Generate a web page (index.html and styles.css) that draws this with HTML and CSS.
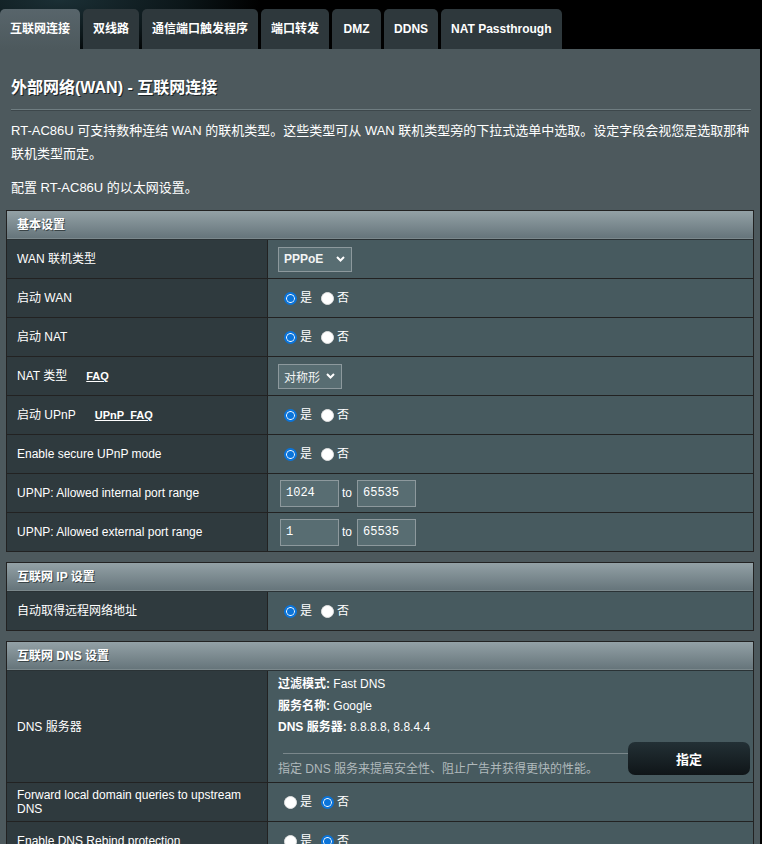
FILE: index.html
```html
<!DOCTYPE html>
<html lang="zh-CN">
<head>
<meta charset="utf-8">
<title>外部网络(WAN) - 互联网连接</title>
<link rel="stylesheet" href="styles.css">
</head>
<body>
<nav class="tabs">
  <a class="tab active">互联网连接</a>
  <a class="tab">双线路</a>
  <a class="tab">通信端口触发程序</a>
  <a class="tab">端口转发</a>
  <a class="tab tab-wide">DMZ</a>
  <a class="tab">DDNS</a>
  <a class="tab">NAT Passthrough</a>
</nav>
<main class="panel">
  <h1 class="title">外部网络(WAN) - 互联网连接</h1>
  <div class="split"></div>
  <p class="desc">RT-AC86U 可支持数种连结 WAN 的联机类型。这些类型可从 WAN 联机类型旁的下拉式选单中选取。设定字段会视您是选取那种联机类型而定。</p>
  <p class="desc desc-2">配置 RT-AC86U 的以太网设置。</p>

  <section class="fs">
    <div class="fs-head">基本设置</div>
    <div class="row">
      <div class="lab">WAN 联机类型</div>
      <div class="val">
        <div class="select select-wan"><span class="sel-text">PPPoE</span><svg class="chev" width="9" height="6" viewBox="0 0 9 6"><polyline points="1,1 4.5,4.5 8,1" fill="none" stroke="#fff" stroke-width="2"/></svg></div>
      </div>
    </div>
    <div class="row">
      <div class="lab">启动 WAN</div>
      <div class="val"><label class="opt"><input type="radio" class="radio" name="wan" checked>是</label><label class="opt"><input type="radio" class="radio" name="wan">否</label></div>
    </div>
    <div class="row">
      <div class="lab">启动 NAT</div>
      <div class="val"><label class="opt"><input type="radio" class="radio" name="nat" checked>是</label><label class="opt"><input type="radio" class="radio" name="nat">否</label></div>
    </div>
    <div class="row">
      <div class="lab">NAT 类型<a class="faq">FAQ</a></div>
      <div class="val">
        <div class="select select-nat"><span class="sel-text sel-cjk">对称形</span><svg class="chev" width="9" height="6" viewBox="0 0 9 6"><polyline points="1,1 4.5,4.5 8,1" fill="none" stroke="#fff" stroke-width="2"/></svg></div>
      </div>
    </div>
    <div class="row">
      <div class="lab">启动 UPnP<a class="faq">UPnP&nbsp;&nbsp;FAQ</a></div>
      <div class="val"><label class="opt"><input type="radio" class="radio" name="upnp" checked>是</label><label class="opt"><input type="radio" class="radio" name="upnp">否</label></div>
    </div>
    <div class="row">
      <div class="lab">Enable secure UPnP mode</div>
      <div class="val"><label class="opt"><input type="radio" class="radio" name="supnp" checked>是</label><label class="opt"><input type="radio" class="radio" name="supnp">否</label></div>
    </div>
    <div class="row">
      <div class="lab">UPNP: Allowed internal port range</div>
      <div class="val val-inputs"><input class="field" type="text" value="1024"><span class="to">to</span><input class="field" type="text" value="65535"></div>
    </div>
    <div class="row">
      <div class="lab">UPNP: Allowed external port range</div>
      <div class="val val-inputs"><input class="field" type="text" value="1"><span class="to">to</span><input class="field" type="text" value="65535"></div>
    </div>
  </section>

  <section class="fs">
    <div class="fs-head">互联网 IP 设置</div>
    <div class="row">
      <div class="lab">自动取得远程网络地址</div>
      <div class="val"><label class="opt"><input type="radio" class="radio" name="ip" checked>是</label><label class="opt"><input type="radio" class="radio" name="ip">否</label></div>
    </div>
  </section>

  <section class="fs">
    <div class="fs-head">互联网 DNS 设置</div>
    <div class="row row-dns">
      <div class="lab">DNS 服务器</div>
      <div class="val val-dns">
        <div class="dns-info">
          <div><b>过滤模式:</b> Fast DNS</div>
          <div><b>服务名称:</b> Google</div>
          <div><b>DNS 服务器:</b> 8.8.8.8, 8.8.4.4</div>
        </div>
        <div class="dns-foot">
          <div class="dns-hint">
            <div class="dns-line"></div>
            <div class="hint-text">指定 DNS 服务来提高安全性、阻止广告并获得更快的性能。</div>
          </div>
          <button class="btn">指定</button>
        </div>
      </div>
    </div>
    <div class="row">
      <div class="lab lab-wrap">Forward local domain queries to upstream DNS</div>
      <div class="val"><label class="opt"><input type="radio" class="radio" name="fwd">是</label><label class="opt"><input type="radio" class="radio" name="fwd" checked>否</label></div>
    </div>
    <div class="row">
      <div class="lab">Enable DNS Rebind protection</div>
      <div class="val"><label class="opt"><input type="radio" class="radio" name="rebind">是</label><label class="opt"><input type="radio" class="radio" name="rebind" checked>否</label></div>
    </div>
  </section>
</main>
</body>
</html>
```

FILE: styles.css
```css
* { box-sizing: border-box; }

html, body {
  margin: 0;
  padding: 0;
}

body {
  width: 762px;
  min-height: 844px;
  background:
    radial-gradient(ellipse 200px 60px at 60px 0, #1b2f35 0%, #0c171a 60%, rgba(0,0,0,0) 100%),
    #000;
  font-family: "Liberation Sans", "Noto Sans CJK SC", sans-serif;
  font-size: 12px;
  color: #fff;
  overflow: hidden;
}

/* tabs */
.tabs {
  display: flex;
  gap: 3px;
  padding-top: 9px;
  height: 49px;
}

.tab {
  display: block;
  height: 40px;
  line-height: 40px;
  padding: 0 10px;
  background: #2e383c;
  border-radius: 5px 5px 0 0;
  color: #fff;
  font-weight: bold;
  font-size: 12px;
  white-space: nowrap;
}

.tab-wide {
  padding: 0 11.5px;
}

.tab.active {
  background: linear-gradient(#58656b, #4d595d);
}

/* panel */
.panel {
  width: 760px;
  min-height: 795px;
  background: #4d595d;
  padding: 29px 6px 20px 6px;
}

.title {
  margin: 0 0 0 5px;
  font-size: 16px;
  line-height: 20px;
  font-weight: bold;
  color: #fff;
  text-shadow: 1px 1px 0 #1b2326;
}

.split {
  margin: 11px 3px 0 5px;
  height: 2px;
  border-top: 1px solid #6f7d81;
  border-bottom: 1px solid #3d474b;
}

.desc {
  margin: 8px 0 0 5px;
  font-size: 13px;
  line-height: 23px;
  color: #fff;
}

.desc-2 {
  margin-top: 11px;
}

/* fieldset tables */
.fs {
  width: 748px;
  border: 1px solid #222;
  margin-top: 11px;
}

.fs + .fs {
  margin-top: 10px;
}

.fs-head {
  height: 28px;
  line-height: 28px;
  padding-left: 10px;
  background: linear-gradient(#93a1a6, #66757b);
  border-bottom: 1px solid #7b888c;
  font-weight: bold;
  font-size: 12px;
  color: #fff;
  text-shadow: 1px 1px 0 #3a4447;
}

.row {
  display: flex;
  height: 39px;
  border-top: 1px solid #222;
}

.fs-head + .row {
  border-top-color: #2a3235;
}

.row-dns {
  height: 112px;
}

.lab {
  width: 261px;
  flex: none;
  display: flex;
  align-items: center;
  padding: 0 10px;
  background: #2f3a3e;
  border-right: 1px solid #222;
  font-size: 12px;
  line-height: 14px;
  color: #fff;
}

.lab-wrap {
  display: block;
  padding-top: 5px;
}

.faq {
  margin-left: 19px;
  font-size: 11px;
  font-weight: bold;
  text-decoration: underline;
  color: #fff;
}

.val {
  flex: 1;
  display: flex;
  align-items: center;
  padding: 0 10px;
  background: #475a5f;
  font-size: 12px;
}

/* select look-alike */
.select {
  display: flex;
  align-items: center;
  justify-content: space-between;
  height: 25px;
  padding: 0 6px 0 5px;
  background: #586d72;
  border: 1px solid #8d999d;
  color: #fff;
}

.select-wan { width: 74px; }
.select-nat { width: 64px; }

.sel-text {
  font-weight: bold;
  font-size: 12px;
  color: #f2f4f4;
}

.sel-cjk {
  font-weight: normal;
  font-size: 12px;
}

.chev { display: block; }

/* radios */
.opt {
  display: inline-flex;
  align-items: center;
  margin-left: 6px;
  margin-right: 2px;
  line-height: 14px;
  color: #fff;
}

.opt + .opt {
  margin-left: 7px;
}

.radio {
  -webkit-appearance: none;
  appearance: none;
  flex: none;
  width: 13px;
  height: 13px;
  margin: 0 3px 0 0;
  border-radius: 50%;
  background: #fff;
  border: 1px solid #e2e2e2;
}

.radio:checked {
  border: 2px solid #0a74da;
  background: #0a74da;
  box-shadow: inset 0 0 0 1px #fff;
}

/* inputs */
.val-inputs {
  padding-left: 12px;
}

.field {
  width: 59px;
  height: 27px;
  margin: 0;
  padding: 0 5px;
  background: #586d72;
  border: 1px solid #8d999d;
  color: #fff;
  font-family: "Liberation Mono", monospace;
  font-size: 12px;
}

.to {
  margin: 0 3px 0 3px;
  width: 12px;
}

/* DNS */
.val-dns {
  display: block;
  padding: 3px 3px 0 10px;
}

.dns-info {
  line-height: 21.5px;
}

.dns-info b {
  font-weight: bold;
}

.dns-foot {
  display: flex;
  align-items: flex-start;
  margin-top: 3px;
}

.dns-hint {
  flex: 1;
  padding-top: 11px;
}

.dns-line {
  margin-left: 5px;
  height: 1px;
  background: #7a878b;
}

.hint-text {
  margin-top: 5px;
  line-height: 20px;
  color: #b0b9bc;
}

.btn {
  width: 122px;
  height: 33px;
  margin: 0;
  border: none;
  border-radius: 7px;
  background: linear-gradient(#233035, #0f1518);
  color: #fff;
  font-family: "Liberation Sans", "Noto Sans CJK SC", sans-serif;
  font-size: 13px;
  font-weight: bold;
}
```
